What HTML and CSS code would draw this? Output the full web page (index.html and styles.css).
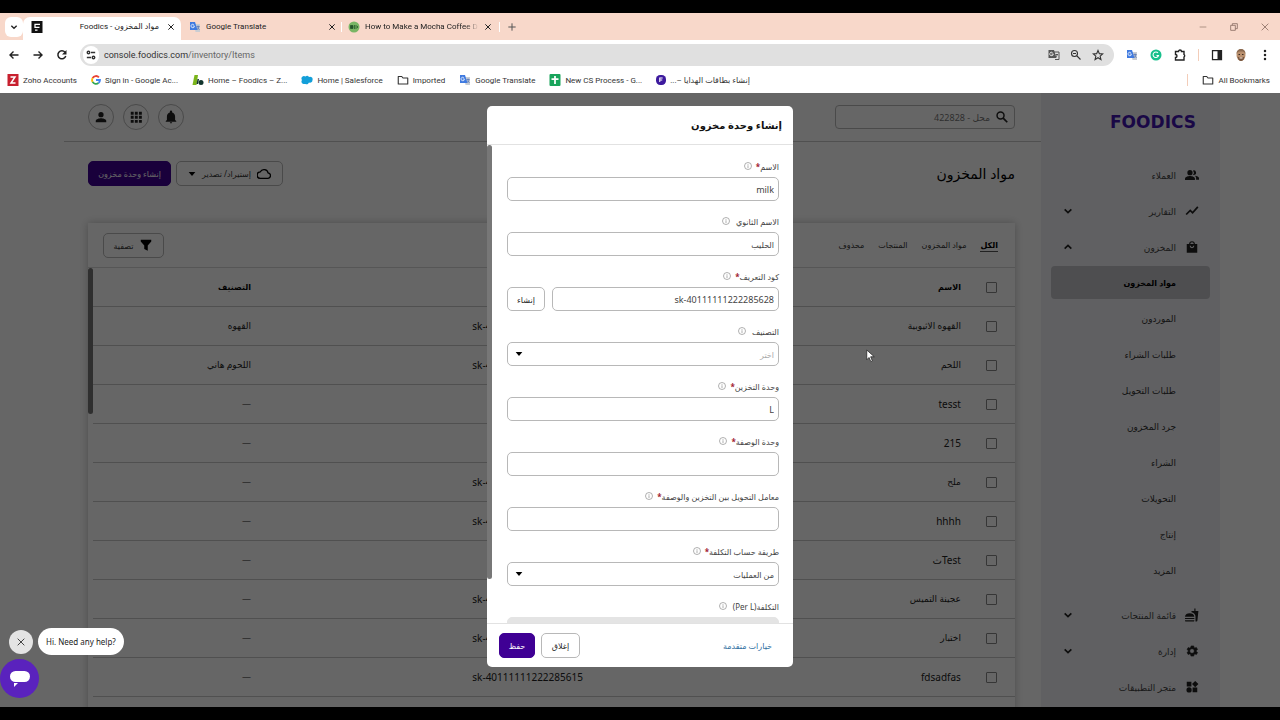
FILE: index.html
```html
<!DOCTYPE html>
<html lang="ar">
<head>
    <meta charset="UTF-8">
    <meta name="viewport" content="width=device-width, initial-scale=1.0">
    <title>Foodics - مواد المخزون</title>
    <link rel="stylesheet" href="styles.css">
</head>
<body>
    <!-- shared icons -->
    <svg class="sprite" aria-hidden="true">
        <symbol id="i-x" viewBox="0 0 24 24"><path d="M4 4l16 16M20 4L4 20" fill="none" stroke="currentColor" stroke-width="3"/></symbol>
        <symbol id="i-down" viewBox="0 0 24 24"><path d="M4 8l8 8 8-8" fill="none" stroke="currentColor" stroke-width="4"/></symbol>
        <symbol id="i-caret" viewBox="0 0 24 24"><path d="M2 6h20L12 18z"/></symbol>
        <symbol id="i-info" viewBox="0 0 24 24"><circle cx="12" cy="12" r="10.500" fill="none" stroke="currentColor" stroke-width="2"/><path d="M11 10h2v8h-2zM11 6h2v2h-2z"/></symbol>
        <symbol id="i-folder" viewBox="0 0 24 24"><path d="M2.500 5h7l2.500 3h9.500v12h-19z" fill="none" stroke="currentColor" stroke-width="2.200" stroke-linejoin="round"/></symbol>
        <symbol id="i-translate" viewBox="0 0 24 24"><path d="M10 6h12v16h-9z" fill="#c9cdd3"/><path d="M2 2h10l5 16H2z" fill="#3f7ae0"/><path d="M11 10.500A3.500 3.500 0 1 1 9.500 7M7.500 10H11" fill="none" stroke="#fff" stroke-width="1.600"/><path d="M15 11h6M18 9v2M20 11c-.5 3-2 5-4 6M17 13l4 5" stroke="#4a6fb5" stroke-width="1.400" fill="none"/></symbol>
    </svg>

    <header class="browser">
        <div class="tab-strip">
            <button class="tab-search" aria-label="Search tabs"><svg class="s8"><use href="#i-down"/></svg></button>
            <div class="tab active">
                <svg class="s12" viewBox="0 0 24 24"><rect x="1" width="22" height="24" fill="#111"/><path d="M18 6.500H8v6h9M13 18h-5" fill="none" stroke="#fff" stroke-width="2.500"/></svg>
                <span class="tab-title end" dir="ltr">Foodics - مواد المخزون</span>
                <button class="tab-close" aria-label="Close tab"><svg class="s8"><use href="#i-x"/></svg></button>
            </div>
            <div class="tab second">
                <svg class="s12"><use href="#i-translate"/></svg>
                <span class="tab-title">Google Translate</span>
                <button class="tab-close" aria-label="Close tab"><svg class="s8"><use href="#i-x"/></svg></button>
            </div>
            <div class="tab third">
                <svg class="s12" viewBox="0 0 24 24"><circle cx="12" cy="12" r="11" fill="#79b665"/><path d="M5 9v6h5V9zM13 8v8M16 8v8M19 10v4" fill="#24552a" stroke="#24552a" stroke-width="1.500"/></svg>
                <span class="tab-title fade">How to Make a Mocha Coffee D</span>
                <button class="tab-close" aria-label="Close tab"><svg class="s8"><use href="#i-x"/></svg></button>
            </div>
            <button class="new-tab" aria-label="New tab"><svg class="s8" viewBox="0 0 24 24"><path d="M12 1v22M1 12h22" stroke="#555" stroke-width="3"/></svg></button>
            <div class="window-controls">
                <button aria-label="Minimize"><svg class="s8" viewBox="0 0 24 24"><path d="M2 12h20" stroke="currentColor" stroke-width="2"/></svg></button>
                <button aria-label="Restore"><svg class="s8" viewBox="0 0 24 24"><path d="M2 7h14v15H2zM7 7V2h15v15h-6" fill="none" stroke="currentColor" stroke-width="2.500"/></svg></button>
                <button aria-label="Close"><svg class="s8" viewBox="0 0 24 24"><path d="M2 2l20 20M22 2L2 22" stroke="currentColor" stroke-width="2.500"/></svg></button>
            </div>
        </div>

        <div class="toolbar">
            <button aria-label="Back"><svg class="s12" viewBox="0 0 24 24"><path d="M21 12H4M11 5l-7 7 7 7" fill="none" stroke="currentColor" stroke-width="2.800"/></svg></button>
            <button aria-label="Forward"><svg class="s12" viewBox="0 0 24 24"><path d="M3 12h17M13 5l7 7-7 7" fill="none" stroke="currentColor" stroke-width="2.800"/></svg></button>
            <button aria-label="Reload"><svg class="s12" viewBox="0 0 24 24"><path d="M19.500 14A8 8 0 1 1 18 6.500" fill="none" stroke="currentColor" stroke-width="3"/><path d="M21 2v9h-9z"/></svg></button>
            <div class="omnibox">
                <button class="site-info" aria-label="Site information"><svg class="s10" viewBox="0 0 24 24"><path d="M12 6h10M2 18h10" stroke="currentColor" stroke-width="3.500"/><circle cx="6" cy="6" r="3" fill="none" stroke="currentColor" stroke-width="3.500"/><circle cx="18" cy="18" r="3" fill="none" stroke="currentColor" stroke-width="3.500"/></svg></button>
                <span class="url">console.foodics.com<span>/inventory/Items</span></span>
                <button aria-label="Translate page"><svg class="s12" viewBox="0 0 24 24"><path d="M11 6h11v15h-8" fill="none" stroke="#555" stroke-width="2"/><path d="M1 2h11l5 16H1z" fill="#555"/><path d="M10.500 10A3.500 3.500 0 1 1 9 7M7 10h4" fill="none" stroke="#e0e0e0" stroke-width="2"/><path d="M15 11h5M18 11c0 3-1 4-2 5" stroke="#555" stroke-width="2" fill="none"/></svg></button>
                <button aria-label="Zoom"><svg class="s12" viewBox="0 0 24 24"><circle cx="9" cy="9" r="6" fill="none" stroke="currentColor" stroke-width="2.200"/><path d="M14 14l7 7M6 9h6" stroke="currentColor" stroke-width="2.200"/></svg></button>
                <button aria-label="Bookmark"><svg class="s12" viewBox="0 0 24 24"><path d="M12 3l2.700 6.300 6.800.6-5.200 4.500 1.600 6.700L12 17.500l-5.900 3.600 1.600-6.700L2.500 9.900l6.800-.6z" fill="none" stroke="currentColor" stroke-width="2.200"/></svg></button>
            </div>
            <div class="extensions">
                <button aria-label="Google Translate"><svg class="s12"><use href="#i-translate"/></svg></button>
                <button aria-label="Grammar"><svg class="s12" viewBox="0 0 24 24"><circle cx="12" cy="12" r="11" fill="#18c08c"/><path d="M16 8a5.500 5.500 0 1 0 1 5h-4" fill="none" stroke="#fff" stroke-width="2.200"/></svg></button>
                <button aria-label="Extensions"><svg class="s12" viewBox="0 0 24 24"><path d="M3 5h6a3 3 0 0 1 6 0h5v6a3 3 0 0 1 0 5v6H3v-5a3 3 0 0 0 0-6z" fill="none" stroke="currentColor" stroke-width="2.800"/></svg></button>
                <i class="divider"></i>
                <button aria-label="Side panel"><svg class="s12" viewBox="0 0 24 24"><path d="M3 3h18v18H3z" fill="none" stroke="currentColor" stroke-width="2.500"/><path d="M13 3h8v18h-8z"/></svg></button>
                <button aria-label="Profile"><svg class="s12" viewBox="0 0 24 24"><ellipse cx="12" cy="12" rx="9" ry="12" fill="#b98f6d"/><path d="M3 10C3 3 7 0 12 0s9 3 9 10c-2-4-4-5-9-5s-7 1-9 5z" fill="#8c6a50"/><path d="M7 11h3M14 11h3" stroke="#3a2a22" stroke-width="2"/><path d="M5 15c1 6 4 9 7 9s6-3 7-9c-3 3-11 3-14 0z" fill="#76553f"/><path d="M9 18h6" stroke="#f0e0d5" stroke-width="2"/></svg></button>
                <button aria-label="Menu"><svg class="s12" viewBox="0 0 24 24"><circle cx="12" cy="4" r="2.500"/><circle cx="12" cy="12" r="2.500"/><circle cx="12" cy="20" r="2.500"/></svg></button>
            </div>
        </div>

        <nav class="bookmarks">
            <a href="#"><svg class="s12" viewBox="0 0 24 24"><rect x="1" width="22" height="24" fill="#c8202f"/><path d="M7 6h9L8 18h9" fill="none" stroke="#fff" stroke-width="3"/></svg>Zoho Accounts</a>
            <a href="#"><svg class="s10" viewBox="0 0 24 24"><g fill="none" stroke-width="4.500"><path d="M19 5.500A9.500 9.500 0 0 0 3.800 7.500" stroke="#ea4335"/><path d="M3.800 7.500a9.500 9.500 0 0 0 0 9" stroke="#fbbc05"/><path d="M3.800 16.500A9.500 9.500 0 0 0 18 19.300" stroke="#34a853"/><path d="M18 19.300a9.500 9.500 0 0 0 3.500-7.300H12" stroke="#4285f4"/></g></svg>Sign in - Google Ac...</a>
            <a href="#"><svg class="s12" viewBox="0 0 24 24"><path d="M5 2h7l-3 20H1z" fill="#7bb51b"/><circle cx="18" cy="17" r="5" fill="#12352d"/><path d="M11 10h3l-2 10H9z" fill="#12352d"/></svg>Home – Foodics – Z...</a>
            <a href="#"><svg class="s12" viewBox="0 0 24 24"><path d="M5 20a5 5 0 0 1-3-8 5 5 0 0 1 7-7 5 5 0 0 1 7 1 5 5 0 0 1 7 6c0 5-4 6-7 5-2 4-5 4-7 3z" fill="#139fd9"/></svg>Home | Salesforce</a>
            <a href="#"><svg class="s12"><use href="#i-folder"/></svg>Imported</a>
            <a href="#"><svg class="s12"><use href="#i-translate"/></svg>Google Translate</a>
            <a href="#"><svg class="s12" viewBox="0 0 24 24"><rect x="1" width="22" height="24" rx="2" fill="#19a45b"/><path d="M5 10h14M12 4v16" stroke="#fff" stroke-width="3.500"/></svg>New CS Process - G...</a>
            <a href="#"><svg class="s10" viewBox="0 0 24 24"><rect width="24" height="24" rx="10" fill="#3d1a9e"/><path d="M16 7H9v10M9 12h6" fill="none" stroke="#fff" stroke-width="2.500"/></svg><span dir="rtl">إنشاء بطاقات الهدايا –...</span></a>
            <i class="divider"></i>
            <a href="#"><svg class="s12"><use href="#i-folder"/></svg>All Bookmarks</a>
        </nav>
    </header>

    <div class="viewport" dir="rtl">
        <div class="app">
            <aside class="sidebar">
                <a class="logo" href="#">FOODICS</a>
                <nav class="menu">
                    <a class="item" href="#"><svg class="s14" viewBox="0 0 24 24"><path d="M16.700 13.100c1.300 1 2.300 2.200 2.300 3.900v3h5v-3c0-2.200-3.600-3.500-7.300-3.900zM15 12a4 4 0 1 0-1.300-7.800 6 6 0 0 1 0 7.600c.4.100.9.200 1.300.2z"/><circle cx="8.500" cy="8" r="4.500"/><path d="M8.500 13.500C5.500 13.500 0 15 0 18v2.500h17V18c0-3-5.500-4.500-8.500-4.500z"/></svg><span>العملاء</span></a>
                    <a class="item" href="#"><svg class="s14" viewBox="0 0 24 24"><path d="M2 18l7-7 4 4 9-10" fill="none" stroke="currentColor" stroke-width="3"/></svg><span>التقارير</span><svg class="s10"><use href="#i-down"/></svg></a>
                    <a class="item" href="#"><svg class="s14" viewBox="0 0 24 24"><path d="M3 7h4a5 5 0 0 1 10 0h4v15H3zM9 7h6a3 3 0 0 0-6 0zM8 10a4 4 0 0 0 8 0h-2a2 2 0 0 1-4 0z" fill-rule="evenodd"/></svg><span>المخزون</span><svg class="s10 up"><use href="#i-down"/></svg></a>
                    <a class="sub current" href="#">مواد المخزون</a>
                    <a class="sub" href="#">الموردون</a>
                    <a class="sub" href="#">طلبات الشراء</a>
                    <a class="sub" href="#">طلبات التحويل</a>
                    <a class="sub" href="#">جرد المخزون</a>
                    <a class="sub" href="#">الشراء</a>
                    <a class="sub" href="#">التحويلات</a>
                    <a class="sub" href="#">إنتاج</a>
                    <a class="sub last" href="#">المزيد</a>
                    <a class="item" href="#"><svg class="s14" viewBox="0 0 24 24"><path d="M18.100 23h1.600c.9 0 1.500-.6 1.600-1.500L23 5h-5V1h-2v4h-5l.3 2.300c1.700.5 3.300 1.300 4.200 2.300 1.500 1.500 2.500 3 2.500 5.500V23zM0 22v-1h16v1c0 .5-.5 1-1 1H1c-.5 0-1-.5-1-1zm16-7c0-8-16-8-16 0zM0 17h16v2H0z"/></svg><span>قائمة المنتجات</span><svg class="s10"><use href="#i-down"/></svg></a>
                    <a class="item" href="#"><svg class="s14" viewBox="0 0 24 24"><path d="M19.400 13c.1-.6.100-1.300 0-2l2.100-1.600-2-3.500-2.500 1c-.5-.4-1.100-.7-1.700-1L15 3.300h-4.500L9.700 6c-.6.200-1.200.6-1.700 1L5.500 6l-2 3.400L5.600 11a8 8 0 0 0 0 2l-2.100 1.600 2 3.500L8 17c.5.400 1.100.8 1.700 1l.5 2.700H15l.4-2.700c.6-.2 1.200-.6 1.700-1l2.500 1 2-3.400zM12 8a4 4 0 1 1 0 8 4 4 0 0 1 0-8z" fill-rule="evenodd" stroke="currentColor"/></svg><span>إدارة</span><svg class="s10"><use href="#i-down"/></svg></a>
                    <a class="item" href="#"><svg class="s14" viewBox="0 0 24 24"><path d="M3 3h8v8H3zM13 13h8v8h-8zM17.500 1.500L23 7l-5.500 5.500L12 7z"/><circle cx="7" cy="17" r="4.500"/></svg><span>متجر التطبيقات</span></a>
                </nav>
            </aside>

            <main class="main">
                <div class="topbar">
                    <label class="search"><svg class="s14" viewBox="0 0 24 24"><circle cx="9.500" cy="9.500" r="6" fill="none" stroke="currentColor" stroke-width="2.500"/><path d="M14 14l7 7" stroke="currentColor" stroke-width="3"/></svg><input type="text" aria-label="بحث" placeholder="محل - 422828"></label>
                    <div class="round-buttons">
                        <button aria-label="الإشعارات"><svg class="s14" viewBox="0 0 24 24"><path d="M12 23a2 2 0 0 0 2-2h-4a2 2 0 0 0 2 2zm7-6v-6c0-3.500-2-6-5-6.800V3a2 2 0 0 0-4 0v1.200C7 5 5 7.500 5 11v6l-2 2v1h18v-1z"/></svg></button>
                        <button aria-label="التطبيقات"><svg class="s14" viewBox="0 0 24 24"><path d="M3 3h5v5H3zM10 3h5v5h-5zM17 3h5v5h-5zM3 10h5v5H3zM10 10h5v5h-5zM17 10h5v5h-5zM3 17h5v5H3zM10 17h5v5h-5zM17 17h5v5h-5z"/></svg></button>
                        <button aria-label="الحساب"><svg class="s14" viewBox="0 0 24 24"><circle cx="12" cy="8" r="4.500"/><path d="M12 14c-3 0-9 1.500-9 4.500V21h18v-2.500c0-3-6-4.500-9-4.500z"/></svg></button>
                    </div>
                </div>

                <div class="page-head">
                    <h1>مواد المخزون</h1>
                    <button class="btn import"><svg class="s14" viewBox="0 0 24 24"><path d="M19 10a7.200 7.200 0 0 0-13.500-1.500A5.500 5.500 0 0 0 6 19.500h13a4.800 4.800 0 0 0 0-9.500z" fill="none" stroke="currentColor" stroke-width="2.200"/></svg>إستيراد/ تصدير<svg class="s8"><use href="#i-caret"/></svg></button>
                    <button class="btn primary create">إنشاء وحدة مخزون</button>
                </div>

                <section class="card">
                    <div class="card-bar">
                        <nav class="tabs">
                            <a class="on" href="#">الكل</a>
                            <a href="#">مواد المخزون</a>
                            <a href="#">المنتجات</a>
                            <a href="#">محذوف</a>
                        </nav>
                        <button class="btn filter"><svg class="s14" viewBox="0 0 24 24"><path d="M3 3h18v3l-6 7v9l-6-3v-6L3 6z"/></svg>تصفية</button>
                    </div>
                    <div class="table-wrap">
                        <table>
                            <colgroup><col class="c-check"><col class="c-name"><col class="c-sku"><col></colgroup>
                            <thead>
                                <tr><th><input type="checkbox" aria-label="تحديد الكل"></th><th>الاسم</th><th>كود التعريف</th><th>التصنيف</th></tr>
                            </thead>
                            <tbody>
                                <tr><td><input type="checkbox" aria-label="القهوه الاثيوبية"></td><td>القهوه الاثيوبية</td><td class="en">sk-40111111222285623</td><td>القهوه</td></tr>
                                <tr><td><input type="checkbox" aria-label="اللحم"></td><td>اللحم</td><td class="en">sk-40111111222285622</td><td>اللحوم هاني</td></tr>
                                <tr><td><input type="checkbox" aria-label="tesst"></td><td class="en">tesst</td><td></td><td>—</td></tr>
                                <tr><td><input type="checkbox" aria-label="215"></td><td class="en">215</td><td></td><td>—</td></tr>
                                <tr><td><input type="checkbox" aria-label="ملح"></td><td>ملح</td><td class="en">sk-40111111222285619</td><td>—</td></tr>
                                <tr><td><input type="checkbox" aria-label="hhhh"></td><td class="en">hhhh</td><td class="en">sk-40111111222285618</td><td>—</td></tr>
                                <tr><td><input type="checkbox" aria-label="Testث"></td><td class="en">Testث</td><td></td><td>—</td></tr>
                                <tr><td><input type="checkbox" aria-label="عجينة التميس"></td><td>عجينة التميس</td><td class="en">sk-40111111222285617</td><td>—</td></tr>
                                <tr><td><input type="checkbox" aria-label="اختبار"></td><td>اختبار</td><td class="en">sk-40111111222285616</td><td>—</td></tr>
                                <tr><td><input type="checkbox" aria-label="fdsadfas"></td><td class="en">fdsadfas</td><td class="en">sk-40111111222285615</td><td>—</td></tr>
                            </tbody>
                        </table>
                        <div class="scroll"><div class="thumb"></div></div>
                    </div>
                </section>
            </main>
        </div>

        <div class="overlay">
            <form class="modal" role="dialog" aria-labelledby="modal-title">
                <h2 id="modal-title">إنشاء وحدة مخزون</h2>
                <div class="modal-body">
                    <div class="fields">
                        <div class="field">
                            <label for="name">الاسم<b>*</b><svg class="s8"><use href="#i-info"/></svg></label>
                            <input type="text" id="name" class="en" value="milk">
                        </div>
                        <div class="field">
                            <label for="name2">الاسم الثانوي<svg class="s8"><use href="#i-info"/></svg></label>
                            <input type="text" id="name2" value="الحليب">
                        </div>
                        <div class="field">
                            <label for="sku">كود التعريف<b>*</b><svg class="s8"><use href="#i-info"/></svg></label>
                            <div class="with-button">
                                <input type="text" id="sku" class="en" value="sk-40111111222285628">
                                <button type="button" class="btn">إنشاء</button>
                            </div>
                        </div>
                        <div class="field">
                            <label for="category">التصنيف<svg class="s8"><use href="#i-info"/></svg></label>
                            <div class="select">
                                <select id="category" class="empty"><option>اختر</option></select>
                                <svg class="s8"><use href="#i-caret"/></svg>
                            </div>
                        </div>
                        <div class="field">
                            <label for="storage">وحدة التخزين<b>*</b><svg class="s8"><use href="#i-info"/></svg></label>
                            <input type="text" id="storage" class="en" value="L">
                        </div>
                        <div class="field">
                            <label for="recipe">وحدة الوصفة<b>*</b><svg class="s8"><use href="#i-info"/></svg></label>
                            <input type="text" id="recipe">
                        </div>
                        <div class="field">
                            <label for="factor">معامل التحويل بين التخزين والوصفة<b>*</b><svg class="s8"><use href="#i-info"/></svg></label>
                            <input type="text" id="factor">
                        </div>
                        <div class="field">
                            <label for="costing">طريقة حساب التكلفة<b>*</b><svg class="s8"><use href="#i-info"/></svg></label>
                            <div class="select">
                                <select id="costing"><option>من العمليات</option></select>
                                <svg class="s8"><use href="#i-caret"/></svg>
                            </div>
                        </div>
                        <div class="field">
                            <label for="cost">التكلفة(Per L)<svg class="s8"><use href="#i-info"/></svg></label>
                            <input type="text" id="cost" disabled>
                        </div>
                    </div>
                    <div class="scroll"><div class="thumb"></div></div>
                </div>
                <div class="modal-foot">
                    <a href="#">خيارات متقدمة</a>
                    <button type="button" class="btn">إغلاق</button>
                    <button type="button" class="btn primary">حفظ</button>
                </div>
            </form>
        </div>

        <div class="chat" dir="ltr">
            <div class="chat-row">
                <button class="chat-close" aria-label="Dismiss"><svg class="s8" viewBox="0 0 24 24"><path d="M2 2l20 20M22 2L2 22" stroke="currentColor" stroke-width="2.500"/></svg></button>
                <span class="bubble">Hi. Need any help?</span>
            </div>
            <button class="chat-open" aria-label="Chat"><svg viewBox="0 0 20 16"><rect width="20" height="11" rx="5.500" fill="#fff"/><path d="M4 12h4l-4 4z" fill="#fff"/></svg></button>
        </div>

        <svg class="cursor" viewBox="0 0 12 18"><path d="M1 1v13l3-3 2.500 5.500 2-1L6.200 10H11z" fill="#fff" stroke="#222"/></svg>
    </div>
</body>
</html>
```
FILE: styles.css
```css
* {
    box-sizing: border-box;
}

body {
    margin: 0;
    height: 100vh;
    display: flex;
    flex-direction: column;
    overflow: hidden;
    border-top: 13px solid #000;
    border-bottom: 13px solid #000;
    background-color: #fff;
    color: #222;
    font-family: "Noto Sans", "DejaVu Sans", sans-serif;
    font-size: 9px;
}

button, input, select {
    font: inherit;
    color: inherit;
    margin: 0;
}

button {
    display: flex;
    align-items: center;
    justify-content: center;
    padding: 0;
    border: none;
    background: none;
    cursor: pointer;
}

a {
    color: inherit;
    text-decoration: none;
}

svg {
    fill: currentColor;
    flex-shrink: 0;
}

.sprite {
    position: absolute;
    width: 0;
    height: 0;
}

.s8 { width: 8px; height: 8px; }
.s10 { width: 10px; height: 10px; }
.s12 { width: 12px; height: 12px; }
.s14 { width: 14px; height: 14px; }

/* browser */
.browser {
    flex-shrink: 0;
    font-family: Roboto, "DejaVu Sans", sans-serif;
    font-size: 8px;
}

.tab-strip {
    display: flex;
    align-items: center;
    height: 27px;
    padding-left: 5px;
    background-color: #f8d8ca;
}

.tab-search {
    width: 18px;
    height: 20px;
    border-radius: 6px;
    background-color: #fff;
}

.tab {
    display: flex;
    align-items: center;
    gap: 5px;
    height: 23px;
    margin-top: 4px;
    padding: 0 6px 4px 8px;
}

.tab.active {
    width: 158px;
    gap: 8px;
    background-color: #fff;
    border-radius: 7px 7px 0 0;
}

.tab.second {
    width: 161px;
}

.tab.third {
    width: 158px;
    padding-left: 6px;
}

.tab.third .tab-close {
    margin-right: 2px;
}

.tab.second,
.tab.third {
    background: linear-gradient(#fff, #fff) right 5px / 1px 10px no-repeat;
}

.tab-title {
    flex: 1;
    overflow: hidden;
    white-space: nowrap;
}

.tab-title.end {
    text-align: right;
}

.tab-title.fade {
    mask-image: linear-gradient(to right, #000 88%, transparent);
}

.new-tab {
    margin-left: 8px;
}

.window-controls {
    display: flex;
    gap: 23px;
    margin-left: auto;
    margin-right: 11px;
    color: #8b6f64;
}

.toolbar {
    display: flex;
    align-items: center;
    gap: 12px;
    height: 29px;
    padding: 0 9px 0 8px;
}

.omnibox {
    display: flex;
    align-items: center;
    gap: 10px;
    flex: 1;
    height: 22px;
    padding: 0 10px 0 3px;
    border-radius: 11px;
    background-color: #e0e0e0;
    color: #333;
}

.site-info {
    width: 16px;
    height: 18px;
    border-radius: 8px;
    background-color: #fff;
}

.url {
    flex: 1;
    margin-left: -5px;
    font-size: 9px;
}

.url span {
    color: #666;
}

.extensions {
    display: flex;
    align-items: center;
    gap: 12px;
}

.divider {
    width: 1px;
    height: 12px;
    background-color: #f3cdb9;
}

.bookmarks {
    display: flex;
    align-items: center;
    gap: 14px;
    height: 24px;
    padding: 0 10px 2px 7px;
    color: #333;
}

.bookmarks a {
    display: flex;
    align-items: center;
    gap: 4px;
    white-space: nowrap;
}

.bookmarks .divider {
    margin-left: auto;
}

/* page */
.viewport {
    position: relative;
    flex: 1;
    min-height: 0;
    overflow: hidden;
}

.app {
    display: flex;
    height: 100%;
    padding: 0 60px 0 64px;
}

.sidebar {
    width: 179px;
    flex-shrink: 0;
    background-color: #f0f0f4;
}

.logo {
    display: flex;
    align-items: center;
    height: 58px;
    padding-right: 24px;
    color: #4316b0;
    font-family: "DejaVu Sans", sans-serif;
    font-size: 17px;
    font-weight: bold;
}

.menu {
    padding-top: 6px;
}

.item {
    display: flex;
    align-items: center;
    gap: 9px;
    height: 36px;
    padding: 0 21px 0 22px;
}

.item span {
    flex: 1;
    color: #444;
}

.up {
    transform: rotate(180deg);
}

.sub {
    display: flex;
    align-items: center;
    height: 33px;
    margin: 2px 10px 3px;
    padding-right: 34px;
    border-radius: 4px;
    color: #333;
}

.sub.current {
    margin-top: 1px;
    background-color: #c4c4c8;
    color: #000;
    font-size: 8px;
    font-weight: bold;
}

.sub.last {
    margin-bottom: 10px;
}

.main {
    flex: 1;
    min-width: 0;
}

.topbar {
    display: flex;
    align-items: center;
    justify-content: space-between;
    height: 49px;
    padding: 0 26px 0 24px;
    border-bottom: 1px solid #c8c8c8;
}

.search {
    display: flex;
    align-items: center;
    gap: 5px;
    width: 180px;
    height: 24px;
    padding: 0 5px;
    border: 1px solid #b8b8b8;
    border-radius: 4px;
}

.search input {
    flex: 1;
    min-width: 0;
    border: none;
    background: none;
    padding: 0;
    outline: none;
}

.search input::placeholder {
    color: #777;
}

.round-buttons {
    display: flex;
    gap: 9px;
}

.round-buttons button {
    width: 26px;
    height: 26px;
    border: 1px solid #b8b8b8;
    border-radius: 50%;
}

.page-head {
    display: flex;
    align-items: center;
    gap: 5px;
    height: 81px;
    padding: 0 26px 18px 24px;
}

.page-head h1 {
    flex: 1;
    margin: 0;
    color: #000;
    font-size: 14px;
    font-weight: normal;
}

.btn {
    height: 25px;
    padding: 0 10px;
    border: 1px solid #b8b8b8;
    border-radius: 5px;
    font-size: 8px;
    white-space: nowrap;
}

.btn.primary {
    border-color: #3f0094;
    background-color: #3f0094;
    color: #fff;
}

.btn.import {
    gap: 6px;
    width: 107px;
    color: #333;
}

.import svg,
.filter svg {
    color: #000;
}

.btn.create {
    width: 83px;
    padding: 0;
}

.btn.filter {
    gap: 6px;
    width: 61px;
    padding: 0;
    color: #333;
}

.card {
    height: 600px;
    margin: 0 26px 0 24px;
    box-shadow: 0 0 8px rgba(0, 0, 0, 0.25);
}

.card-bar {
    display: flex;
    align-items: center;
    justify-content: space-between;
    height: 45px;
    padding: 0 17px 0 15px;
    border-bottom: 1px solid #d8d8d8;
}

.tabs {
    display: flex;
    gap: 14px;
    color: #333;
    font-size: 8px;
}

.tabs a {
    padding-bottom: 1px;
    border-bottom: 1px solid transparent;
}

.tabs .on {
    border-color: #555;
    color: #000;
    font-weight: bold;
}

.table-wrap {
    display: flex;
    height: 100%;
}

table {
    flex: 1;
    width: 100%;
    height: 0;
    table-layout: fixed;
    border-collapse: separate;
    border-spacing: 0;
}

.c-check { width: 5%; }
.c-name { width: 41%; }
.c-sku { width: 36%; }

th, td {
    height: 39px;
    padding: 0 8px;
    border-bottom: 1px solid #c8c8c8;
    text-align: right;
    line-height: 12px;
}

td.en {
    font-size: 10px;
}

th {
    color: #000;
    font-size: 8px;
}

td:first-child,
th:first-child {
    padding: 0;
    text-align: center;
}

input[type="checkbox"] {
    display: block;
    width: 11px;
    height: 11px;
    margin: 0 auto;
    border: 1px solid #888;
    border-radius: 1px;
    appearance: none;
}

.scroll {
    flex-shrink: 0;
    width: 5px;
}

.thumb {
    height: 146px;
    border-radius: 3px;
    background-color: #777;
}

/* modal */
.overlay {
    position: absolute;
    inset: 0;
    display: flex;
    justify-content: center;
    padding: 13px 0 40px;
    background-color: rgba(0, 0, 0, 0.6);
}

.modal {
    display: flex;
    flex-direction: column;
    width: 306px;
    border-radius: 5px;
    background-color: #fff;
    overflow: hidden;
}

.modal h2 {
    display: flex;
    align-items: center;
    flex-shrink: 0;
    height: 39px;
    margin: 0;
    padding: 0 11px;
    border-bottom: 1px solid #e2e2e2;
    color: #111;
    font-size: 10px;
}

.modal-body {
    display: flex;
    flex: 1;
    min-height: 0;
    overflow: hidden;
}

.fields {
    flex: 1;
    padding: 15px 14px 0 15px;
}

.modal .thumb {
    height: 434px;
}

.field {
    height: 55px;
}

.field label {
    display: flex;
    align-items: center;
    height: 12px;
    margin-bottom: 5px;
    color: #444;
    font-size: 8px;
}

.field b {
    color: #a02030;
}

.field label svg {
    margin-right: 6px;
    color: #888;
}

.field b + svg {
    margin-right: 4px;
}

.field input,
.field select {
    display: block;
    width: 100%;
    height: 24px;
    padding: 0 4px;
    border: 1px solid #b8b8b8;
    border-radius: 5px;
    background-color: #fff;
    color: #444;
    font-size: 8px;
    appearance: none;
    outline: none;
}

.field input.en {
    font-size: 9px;
}

.field input:disabled {
    border-color: #e4e4e4;
    background-color: #e4e4e4;
}

.with-button {
    display: flex;
    gap: 7px;
}

.with-button input {
    flex: 1;
    min-width: 0;
}

.with-button .btn {
    width: 38px;
    height: 24px;
    padding: 0;
}

.select {
    position: relative;
}

.select svg {
    position: absolute;
    left: 8px;
    top: 8px;
    color: #000;
}

.field .empty {
    color: #aaa;
}

.modal-foot {
    display: flex;
    align-items: center;
    gap: 6px;
    flex-shrink: 0;
    height: 44px;
    padding: 0 21px 0 12px;
    border-top: 1px solid #e2e2e2;
}

.modal-foot a {
    flex: 1;
    color: #2f6f9f;
    font-size: 8px;
}

.modal-foot .btn {
    width: 39px;
    padding: 0;
}

.modal-foot .primary {
    width: 36px;
}

/* chat widget */
.chat {
    position: absolute;
    left: 0;
    bottom: 9px;
    font-family: "Noto Sans", sans-serif;
    font-size: 8px;
}

.chat-row {
    display: flex;
    align-items: center;
    gap: 5px;
    padding-left: 9px;
    margin-bottom: 4px;
}

.chat-close {
    width: 24px;
    height: 24px;
    border-radius: 50%;
    background-color: #e4e4e4;
}

.bubble {
    padding: 0 8px;
    border-radius: 14px;
    background-color: #fff;
    line-height: 27px;
    white-space: nowrap;
}

.chat-open {
    width: 39px;
    height: 39px;
    border-radius: 50%;
    background-color: #5a22bd;
}

.chat-open svg {
    width: 20px;
    height: 16px;
}

.cursor {
    position: absolute;
    left: 866px;
    top: 256px;
    width: 9px;
    height: 14px;
}
```
